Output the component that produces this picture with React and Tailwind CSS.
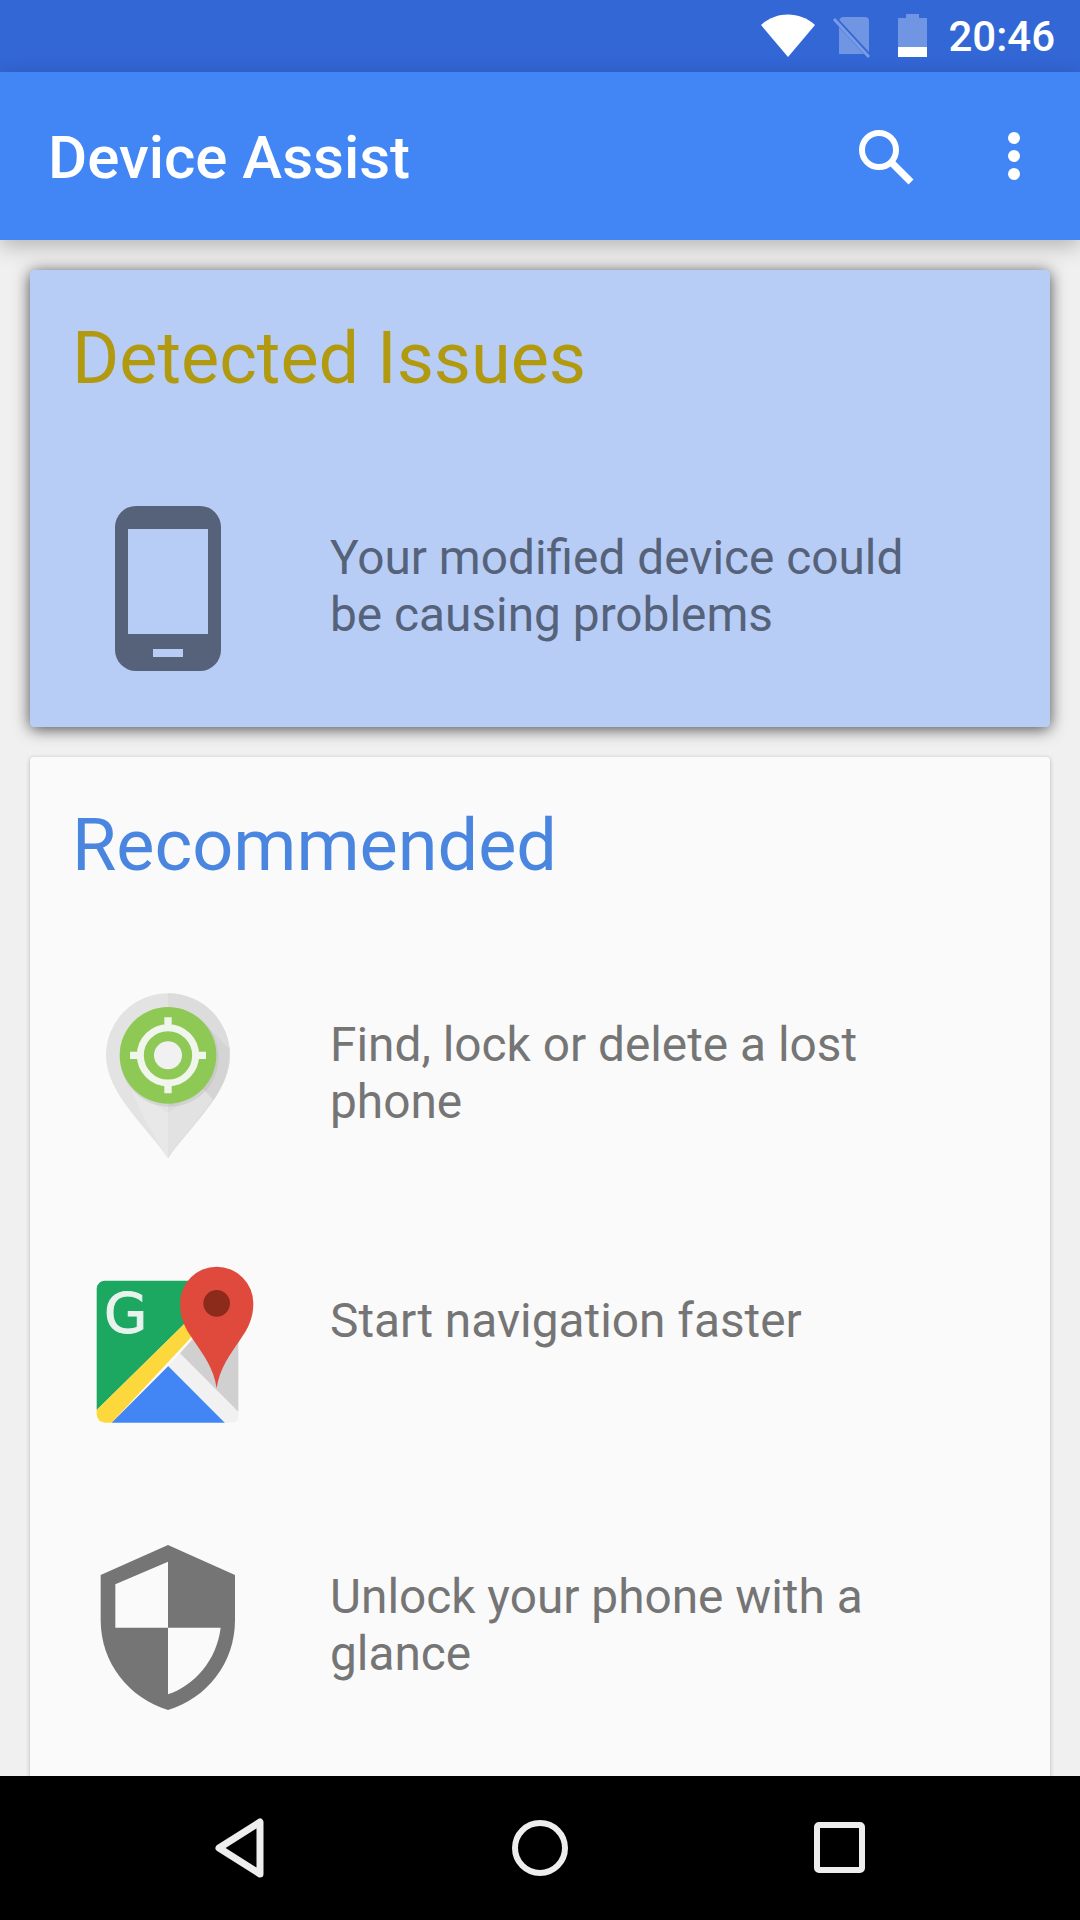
const StatusBar = () => {
	return (
		<div className="h-[72px] bg-[#3367d6] flex justify-end items-start shrink-0 pr-[25px]">
			<svg className="w-[54px] h-[44px] mt-[14px]" viewBox="0 0 54 44">
				<path d="M27 43 L0 11 C15 -3 39 -3 54 11 Z" fill="#ffffff" />
			</svg>
			<svg className="w-[40px] h-[44px] mt-[14px] ml-[17px]" viewBox="0 0 40 44">
				<path d="M7 8 Q7 3 12 3 H33 Q37 3 37 7 V40 H7 Z" fill="#ffffff" fillOpacity="0.3" />
				<path d="M3 5 L38 43" stroke="#3367d6" strokeWidth="5" />
				<path d="M2 5 L37 43" stroke="#ffffff" strokeOpacity="0.35" strokeWidth="3" />
			</svg>
			<svg className="w-[30px] h-[46px] mt-[13px] ml-[26px]" viewBox="0 0 30 46">
				<path d="M0 5 H8 V1 H21 V5 H29 V34 H0 Z" fill="#ffffff" fillOpacity="0.3" />
				<rect x="0" y="34" width="29" height="10" fill="#ffffff" />
			</svg>
			<span className="ml-[20px] font-['Roboto',sans-serif] font-medium text-[42px] leading-[74px] text-white">20:46</span>
		</div>
	)
}

const AppBar = () => {
	return (
		<div className="relative z-10 h-[168px] bg-[#4285f4] flex items-center shrink-0 shadow-[0_6px_20px_rgba(0,0,0,0.25)]">
			<h1 className="flex-1 pl-[48px] pt-[3px] font-['Roboto',sans-serif] font-medium text-[60px] text-white">Device Assist</h1>
			<svg className="w-[60px] h-[60px]" viewBox="0 0 60 60">
				<circle cx="24" cy="24" r="17" fill="none" stroke="#ffffff" strokeWidth="6" />
				<path d="M36 36 L56 56" stroke="#ffffff" strokeWidth="7" />
			</svg>
			<svg className="w-[20px] h-[60px] ml-[89px] mr-[56px]" viewBox="0 0 20 60">
				<circle cx="10" cy="12" r="6" fill="#ffffff" />
				<circle cx="10" cy="30" r="6" fill="#ffffff" />
				<circle cx="10" cy="48" r="6" fill="#ffffff" />
			</svg>
		</div>
	)
}

const PhoneIcon = () => (
	<svg className="w-[210px] h-[210px] shrink-0" viewBox="0 0 210 210">
		<rect x="45" y="23" width="106" height="165" rx="21" fill="#566279" />
		<rect x="58" y="46" width="80" height="105" fill="#b7cdf5" />
		<rect x="83" y="166" width="30" height="8" fill="#b7cdf5" />
	</svg>
)

const PinIcon = () => (
	<svg className="w-[210px] h-[210px] shrink-0" viewBox="0 0 630 630">
		<path d="M294 565 C230 470 108 370 108 256 A186 186 0 0 1 480 256 C480 370 358 470 294 565 Z" fill="#e3e3e3" />
		<path d="M294 565 C358 470 480 370 480 256 A186 186 0 0 0 294 70 Z" fill="#dcdcdc" />
		<path d="M180 345 L294 430 L294 565 C255 505 212 435 180 345 Z" fill="#e8e8e8" />
		<path d="M294 430 L294 565 C340 495 395 440 430 385 L395 350 Z" fill="#e2e2e2" />
		<path d="M396 154 L478 236 C480 300 460 350 430 390 L396 355 L300 410 Z" fill="#cfcfcf" fillOpacity="0.6" />
		<circle cx="298" cy="262" r="148" fill="#b5b5b5" fillOpacity="0.35" />
		<circle cx="294" cy="256" r="145" fill="#8ec955" />
		<circle cx="294" cy="256" r="83" fill="none" stroke="#f1f6ec" strokeWidth="21" />
		<circle cx="294" cy="256" r="42" fill="#f1f1f1" />
		<path d="M294 142 V180 M294 332 V370 M180 256 H218 M370 256 H408" stroke="#f1f6ec" strokeWidth="22" />
	</svg>
)

const MapsIcon = () => (
	<svg className="w-[210px] h-[210px] shrink-0" viewBox="0 18 630 630">
		<path d="M105 122 H360 L345 250 L80 510 V147 A25 25 0 0 1 105 122 Z" fill="#1da862" />
		<path d="M345 250 L365 290 L125 548 H105 A25 25 0 0 1 80 523 V510 Z" fill="#fdd83c" />
		<path d="M125 548 L295 378 L465 548 Z" fill="#4285f4" />
		<path d="M295 378 L330 340 L505 515 V530 A18 18 0 0 1 487 548 H465 Z" fill="#f1f1f1" />
		<path d="M330 340 L370 295 L505 295 V515 Z" fill="#d0d0d0" />
		<path d="M440 445 C432 385 400 345 370 300 C345 265 330 235 330 190 A110 110 0 0 1 550 190 C550 235 535 265 510 300 C480 345 448 385 440 445 Z" fill="#e04a3c" />
		<circle cx="440" cy="190" r="40" fill="#8c2a1c" />
		<text x="102" y="276" fontFamily="DejaVu Sans, sans-serif" fontSize="168" stroke="#e8f3ee" strokeWidth="3" fill="#e8f3ee">G</text>
	</svg>
)

const ShieldIcon = () => (
	<svg className="w-[210px] h-[210px] shrink-0" viewBox="0 6 630 630">
		<path d="M294 75 L495 165 V300 C495 430 410 535 294 570 C178 535 92 430 92 300 V165 Z" fill="#757575" />
		<path d="M136 193 L294 125 V323 H136 Z" fill="#fafafa" />
		<path d="M294 323 H452 C440 420 375 495 294 523 Z" fill="#fafafa" />
	</svg>
)

const Row = ({ icon, text, color }) => {
	return (
		<div className="h-[276px] flex items-start pl-[40px]">
			{icon}
			<p className={`ml-[50px] pt-[47px] w-[620px] font-['Roboto',sans-serif] text-[47.8px] leading-[57px] ${color}`}>{text}</p>
		</div>
	)
}

const NavBar = () => {
	return (
		<div className="h-[144px] bg-black flex justify-between items-center shrink-0 px-[210px]">
			<svg className="w-[60px] h-[64px]" viewBox="0 0 60 64">
				<path d="M9 32 L50 6 V58 Z" fill="none" stroke="#eeeeee" strokeWidth="7" strokeLinejoin="round" />
			</svg>
			<svg className="w-[60px] h-[64px]" viewBox="0 0 60 64">
				<circle cx="30" cy="32" r="25" fill="none" stroke="#eeeeee" strokeWidth="6" />
			</svg>
			<svg className="w-[60px] h-[64px]" viewBox="0 0 60 64">
				<rect x="7" y="9" width="45" height="45" rx="2" fill="none" stroke="#eeeeee" strokeWidth="6" />
			</svg>
		</div>
	)
}

const App = () => {
	return (
		<div className="w-[1080px] h-[1920px] flex flex-col overflow-hidden bg-[#f0f0f0]">
			<StatusBar />
			<AppBar />
			<div className="flex-1 overflow-hidden px-[30px] pt-[30px] flex flex-col gap-[30px]">
				<div className="h-[457px] shrink-0 rounded-[4px] bg-[#b7cdf5] pt-[41px] shadow-[0_2px_16px_rgba(0,0,0,0.7)]">
					<h2 className="h-[96px] pl-[42px] font-['Roboto',sans-serif] text-[72px] leading-[96px] text-[#b29a10]">Detected Issues</h2>
					<div className="mt-[76px]">
						<Row icon={<PhoneIcon />} text="Your modified device could be causing problems" color="text-[#566279]" />
					</div>
				</div>
				<div className="shrink-0 rounded-[4px] bg-[#fafafa] pt-[41px] shadow-[0_1px_4px_rgba(0,0,0,0.25)]">
					<h2 className="h-[96px] pl-[42px] font-['Roboto',sans-serif] text-[72px] leading-[96px] text-[#4a86e0]">Recommended</h2>
					<div className="mt-[76px]">
						<Row icon={<PinIcon />} text="Find, lock or delete a lost phone" color="text-[#757575]" />
						<Row icon={<MapsIcon />} text="Start navigation faster" color="text-[#757575]" />
						<Row icon={<ShieldIcon />} text="Unlock your phone with a glance" color="text-[#757575]" />
					</div>
				</div>
			</div>
			<NavBar />
		</div>
	)
}

export default App
